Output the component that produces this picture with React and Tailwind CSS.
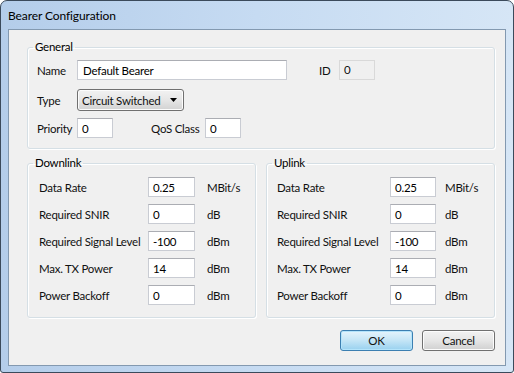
import React from "react";

function TextBox({ value, className = "" }) {
  return (
    <div
      className={
        "h-[20px] flex items-center bg-white border border-[#c9ccd3] border-t-[#abadb3] pl-[4px] leading-[15px] text-black " +
        className
      }
    >
      {value}
    </div>
  );
}

function Row({ label, value, unit, labelW, inputW, unitGap }) {
  return (
    <div className="flex items-center h-[20px]">
      <div className={labelW}>{label}</div>
      <TextBox value={value} className={inputW} />
      <div className={unitGap}>{unit}</div>
    </div>
  );
}

function Group({ title, children, className = "" }) {
  return (
    <fieldset
      className={
        "border border-[#d5dfe5] rounded-[3px] shadow-[inset_1px_1px_0_#ffffff,1px_1px_0_#ffffff] " +
        className
      }
    >
      <legend className="ml-[5px] px-[2px] leading-[16px] text-black">{title}</legend>
      {children}
    </fieldset>
  );
}

const rows = [
  ["Data Rate", "0.25", "MBit/s"],
  ["Required SNIR", "0", "dB"],
  ["Required Signal Level", "-100", "dBm"],
  ["Max. TX Power", "14", "dBm"],
  ["Power Backoff", "0", "dBm"],
];

export default function App() {
  return (
    <div className="w-[514px] h-[373px] bg-white font-['Lato',sans-serif] text-[11.5px] tracking-[-0.25px] leading-[15px] text-[#111] whitespace-nowrap">
      <div className="h-full w-full rounded-t-[7px] rounded-b-[3px] border border-[#3b4a5b] bg-gradient-to-r from-[#b4cdea] via-[#c6dbf2] to-[#d6e6f6] flex flex-col">
        <div className="h-[28px] flex items-center pl-[7px] pt-[1px] text-[12px] tracking-[-0.1px] text-black">
          Bearer Configuration
        </div>
        <div className="mx-[7px] mb-[6px] flex-1 border border-[#8399b0] bg-[#f0f0f0] pl-[18px] pr-[10px] pt-[9px]">
          <Group title="General">
            <div className="pl-[9px] pt-[5px] pb-[10px]">
              <div className="flex items-center h-[20px]">
                <div className="w-[40px]">Name</div>
                <TextBox value="Default Bearer" className="w-[210px] border-[#b5cbe3] border-t-[#9fb8d4] pl-[5px]" />
                <div className="ml-[32px] w-[20px]">ID</div>
                <div className="w-[36px] h-[20px] flex items-center pl-[4px] pb-[2px] border border-[#d9d9d9] bg-[#f0f0f0]">
                  0
                </div>
              </div>
              <div className="flex items-center h-[22px] mt-[9px]">
                <div className="w-[40px]">Type</div>
                <div className="w-[107px] h-[22px] rounded-[3px] border border-[#707070] bg-gradient-to-b from-[#f2f2f2] via-[#e6e6e6] to-[#d2d2d2] shadow-[inset_0_0_0_1px_#fcfcfc] flex items-center pl-[4px] pr-[6px] justify-between">
                  <span>Circuit Switched</span>
                  <svg width="7" height="4" viewBox="0 0 7 4">
                    <path d="M0 0 H7 L3.5 4 Z" fill="#000" />
                  </svg>
                </div>
              </div>
              <div className="flex items-center h-[20px] mt-[7px]">
                <div className="w-[40px]">Priority</div>
                <TextBox value="0" className="w-[36px]" />
                <div className="ml-[38px] w-[54px]">QoS Class</div>
                <TextBox value="0" className="w-[36px]" />
              </div>
            </div>
          </Group>
          <div className="flex gap-[10px] mt-[6px]">
            <Group title="Downlink" className="w-[230px]">
              <div className="pl-[11px] pt-[6px] pb-[12px] flex flex-col gap-[7px]">
                {rows.map(([l, v, u]) => (
                  <Row key={l} label={l} value={v} unit={u} labelW="w-[109px]" inputW="w-[47px]" unitGap="ml-[12px]" />
                ))}
              </div>
            </Group>
            <Group title="Uplink" className="w-[230px]">
              <div className="pl-[10px] pt-[6px] pb-[12px] flex flex-col gap-[7px]">
                {rows.map(([l, v, u]) => (
                  <Row key={l} label={l} value={v} unit={u} labelW="w-[113px]" inputW="w-[46px]" unitGap="ml-[9px]" />
                ))}
              </div>
            </Group>
          </div>
          <div className="flex justify-end gap-[9px] mt-[12px]">
            <div className="w-[73px] h-[21px] rounded-[3px] border border-[#3c7fb1] bg-gradient-to-b from-[#e5f4fc] via-[#c4e5f6] to-[#98d1ef] shadow-[inset_0_0_0_1px_#b4e4fb] flex items-center justify-center">
              OK
            </div>
            <div className="w-[73px] h-[21px] rounded-[3px] border border-[#707070] bg-gradient-to-b from-[#f2f2f2] via-[#e6e6e6] to-[#d0d0d0] shadow-[inset_0_0_0_1px_#fcfcfc] flex items-center justify-center">
              Cancel
            </div>
          </div>
        </div>
      </div>
    </div>
  );
}
